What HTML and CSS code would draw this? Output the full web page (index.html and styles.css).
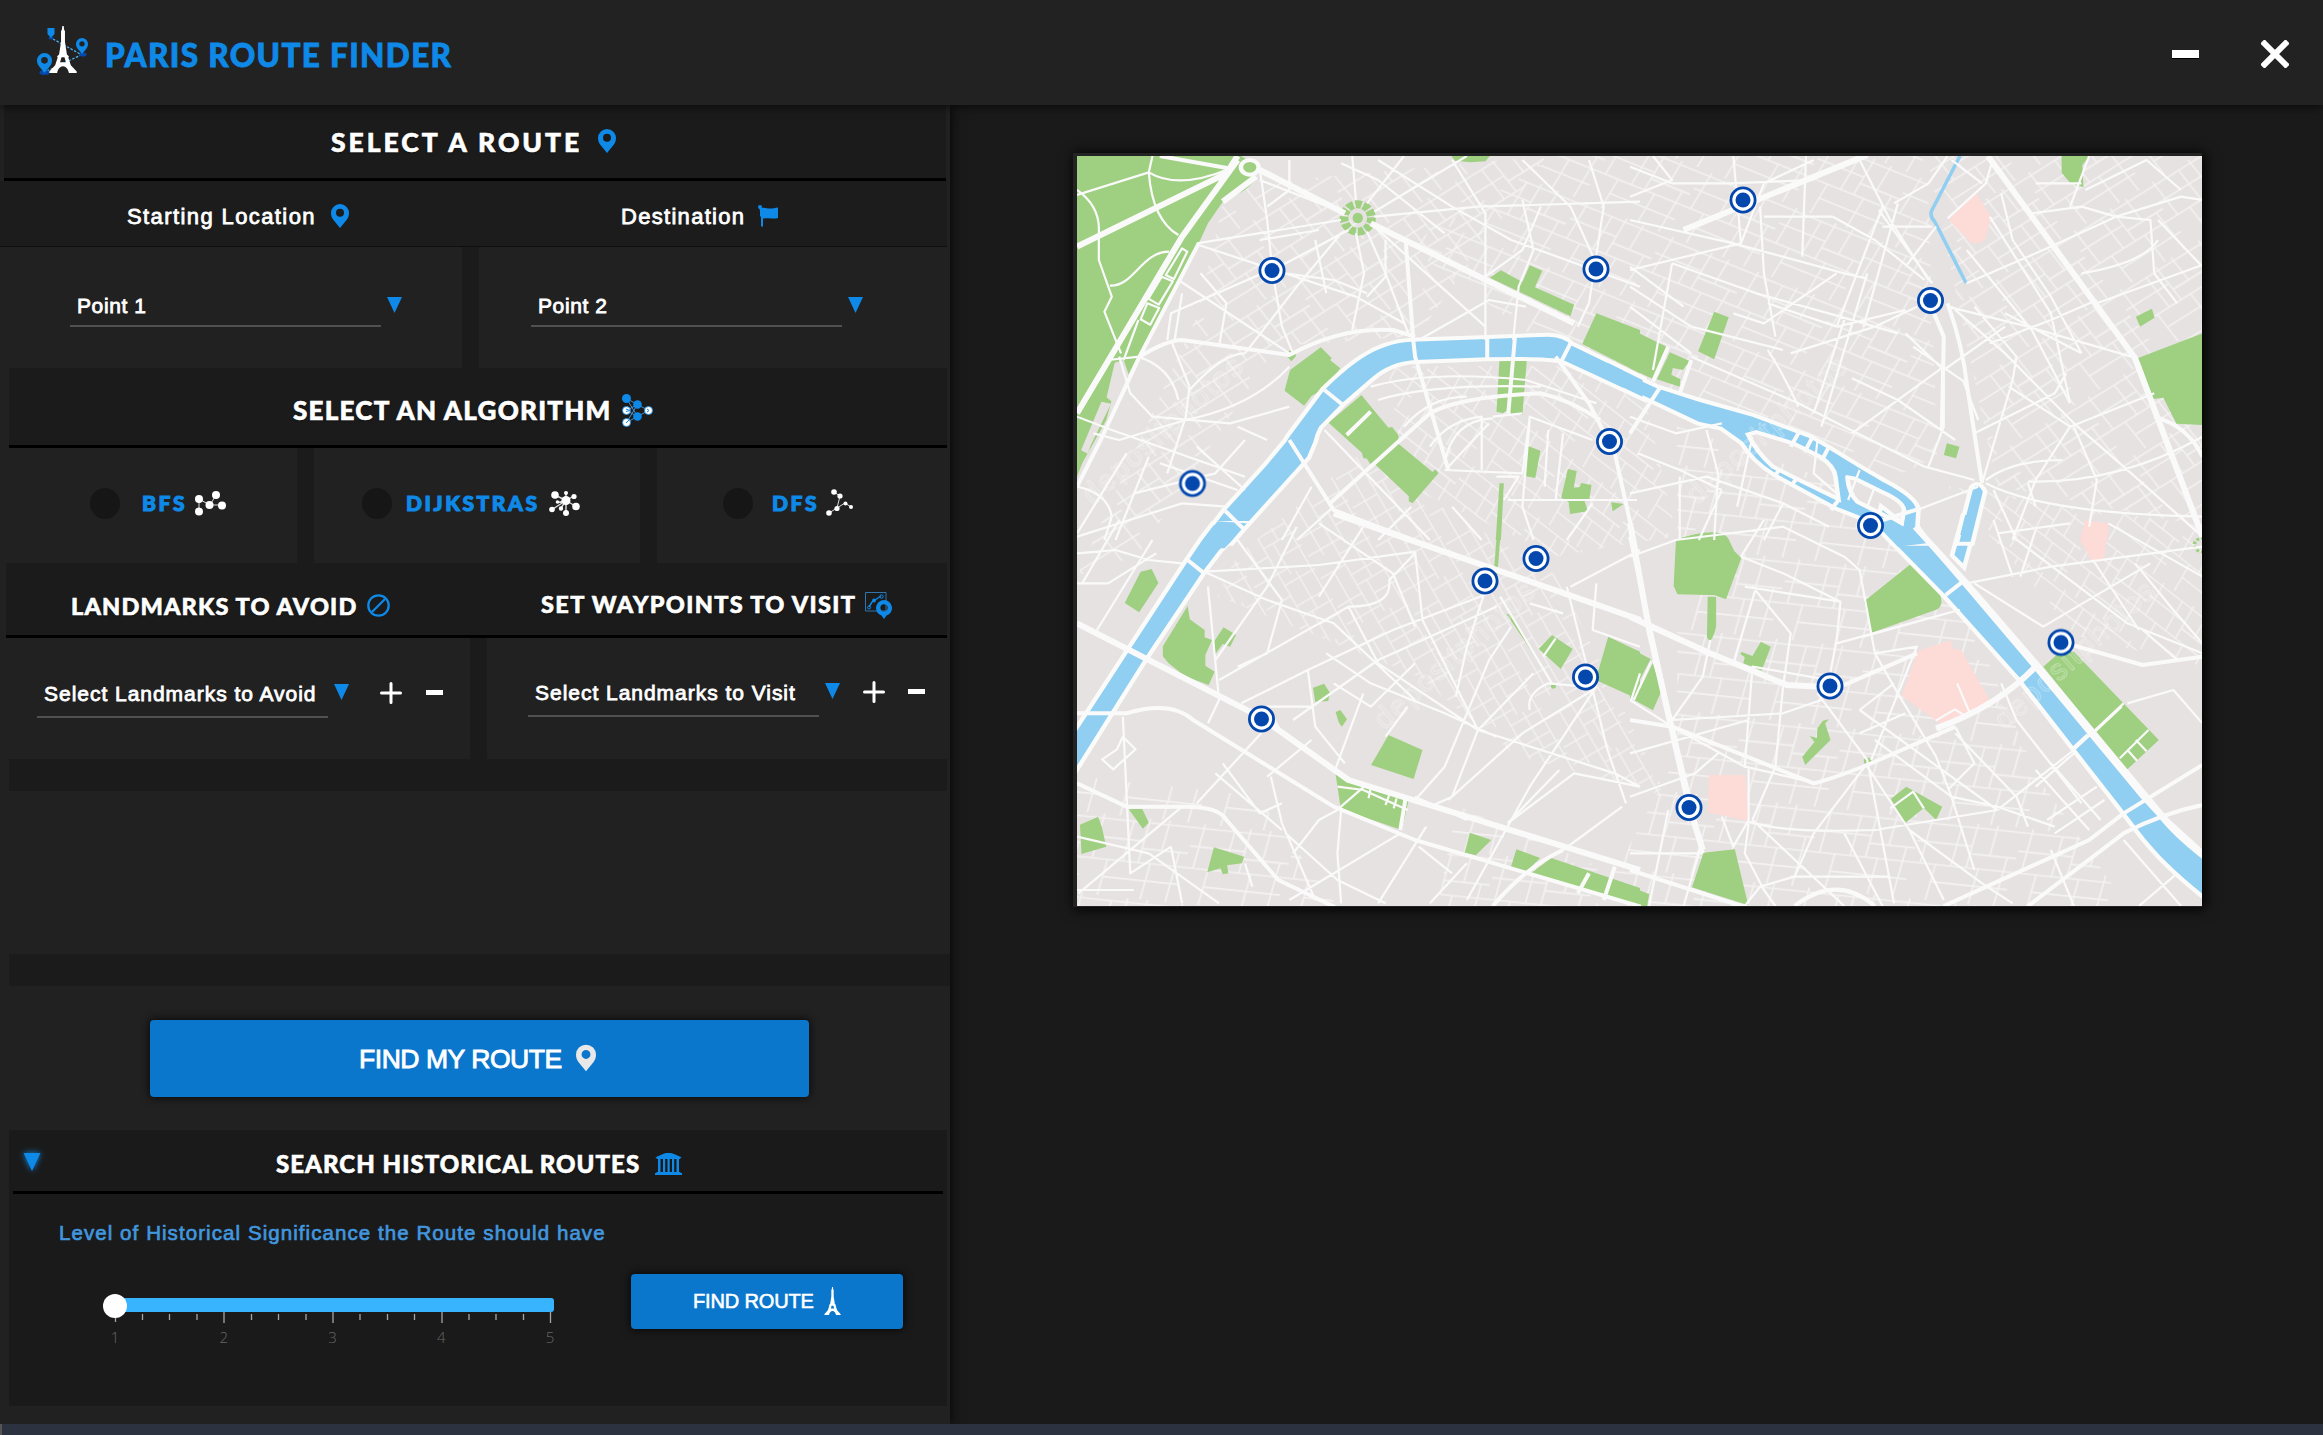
FILE: index.html
```html
<!DOCTYPE html>
<html lang="en">
<head>
<meta charset="utf-8">
<title>Paris Route Finder</title>
<link rel="stylesheet" href="styles.css">
</head>
<body>
<svg class="defs" width="0" height="0">
  <defs>
    <symbol id="pin" viewBox="0 0 18 24"><path fill-rule="evenodd" d="M9 0a9 9 0 0 0-9 9c0 3 1 5 2.500 7L9 24l6.500-8C17 14 18 12 18 9a9 9 0 0 0-9-9zm0 4.800a4 4 0 1 1 0 8 4 4 0 0 1 0-8z"/></symbol>
    <symbol id="tri" viewBox="0 0 15 16"><path d="M0 0h15L7.500 16z"/></symbol>
    <symbol id="tower" viewBox="0 0 28 48"><path fill-rule="evenodd" d="M13.300 0h1.400l.5 4 .8 1v11l2 13 2 2-.5 1.500L22 40l6 6.500V48h-8c-.5-4-3-7-6-7s-5.500 3-6 7H0v-1.500L6 40l2.500-7.500L8 31l2-2 2-13V5l.8-1zM12.500 32l-1.500 5h6l-1.500-5z"/></symbol>
    <symbol id="plus" viewBox="0 0 22 22"><path d="M11 1.500v19M1.500 11h19" stroke="#fff" stroke-width="3" stroke-linecap="round"/></symbol>
    <symbol id="marker" viewBox="-14 -14 28 28"><circle r="13.500" fill="#0448ae"/><circle r="10.700" fill="#fff"/><circle r="7.500" fill="#0448ae"/></symbol>
  </defs>
</svg>
<header class="titlebar">
  <svg class="logo" viewBox="0 0 52 52">
    <path d="M16 13l29 16M10 45l34-16" stroke="#4bb4f5" stroke-width="1.300" stroke-dasharray="2.500 1.500" fill="none"/>
    <ellipse cx="7.500" cy="46.500" rx="5" ry="2.500" fill="#0448ae"/><ellipse cx="46" cy="28.500" rx="3.500" ry="2" fill="#0448ae"/><ellipse cx="14" cy="12" rx="2.500" ry="1.500" fill="#0448ae"/>
    <use href="#pin" x="0" y="27" width="15" height="20"/><use href="#pin" x="39" y="12" width="12" height="16"/>
    <path d="M10.500 2h7v6l-3.500 4-3.500-4z"/>
    <use class="white" href="#tower" x="12" y="0" width="28" height="47"/>
  </svg>
  <h1 class="t-title">PARIS ROUTE FINDER</h1>
  <div class="window-buttons">
    <span class="min"></span>
    <svg class="close" viewBox="0 0 28 28"><path d="M3.500 3.500l21 21M24.500 3.500l-21 21" stroke="#fff" stroke-width="6" stroke-linecap="square" /></svg>
  </div>
</header>
<main class="main">
  <section class="panel">
    <div class="head head-route"><span class="heading t-route">SELECT A ROUTE</span><svg class="i-pin"><use href="#pin"/></svg></div>
    <div class="labels">
      <div class="label-a"><span class="t-start">Starting Location</span><svg class="i-pin"><use href="#pin"/></svg></div>
      <div class="label-b"><span class="t-dest">Destination</span><svg class="i-flag" viewBox="0 0 20 22"><circle cx="2" cy="2" r="2"/><path d="M1 2l2 1c4-1 6 .5 9 .5 3 0 5-.5 8-1V13c-3 1-6 .5-9 .2-2 0-3-.2-6 .3V21l-1 1-1-1V12L2 11V6z"/></svg></div>
    </div>
    <div class="row selects">
      <div class="cell cell-p1"><div class="select w-point"><span class="t-point">Point 1</span></div><svg class="i-tri"><use href="#tri"/></svg></div>
      <div class="cell cell-p2"><div class="select w-point"><span class="t-point">Point 2</span></div><svg class="i-tri"><use href="#tri"/></svg></div>
    </div>
    <div class="head head-algo"><span class="heading t-algo">SELECT AN ALGORITHM</span>
      <svg class="i-algo" viewBox="0 0 31 33"><path d="M4.500 4.500l11 6 11 6-11 6-11 6 11-18M4.500 4.500l11 18-11-6 11-6" stroke="#4a91c9" fill="none"/><circle cx="4.500" cy="4.500" r="4.500"/><circle cx="15.500" cy="10.500" r="4.300"/><circle cx="15.500" cy="22.500" r="4.300"/><g class="white" stroke="#0e89e8" stroke-width=".8"><circle cx="4.500" cy="16.500" r="4"/><circle cx="4.500" cy="28.500" r="4"/><circle cx="26.500" cy="16.500" r="4"/></g><path d="M4 15l4 1.500-4 1M4 29l3-3M25 15l2 1.500-2 1.500" stroke="#0e89e8" fill="none"/></svg>
    </div>
    <div class="row algos">
      <div class="cell cell-bfs"><span class="radio"></span><span class="algo t-bfs">BFS</span>
        <svg class="i-graph" viewBox="0 0 31 25"><g class="white"><path class="edge" d="M4 20V8l11 6 6-10M15 14h12"/><circle cx="4" cy="8" r="4"/><circle cx="4" cy="20.500" r="4"/><circle cx="14.500" cy="14" r="4"/><circle cx="21" cy="4" r="4"/><circle cx="27" cy="14.500" r="4"/></g></svg></div>
      <div class="cell cell-dij"><span class="radio"></span><span class="algo t-dij">DIJKSTRAS</span>
        <svg class="i-graph" viewBox="0 0 31 25"><g class="white"><path class="edge" d="M17 9.500L6 4M17 9.500V2M17 9.500L25 5M17 9.500l10 6M17 9.500V21M17 9.500L3 18.500M17 9.500L12 17M17 9.500l-8 2" stroke-width="1.400"/><circle cx="17" cy="9.500" r="4.500"/><circle cx="6" cy="4" r="3.800"/><circle cx="17" cy="2" r="2"/><circle cx="25" cy="5.500" r="2.600"/><circle cx="27" cy="15.500" r="3.800"/><circle cx="17" cy="22" r="3"/><circle cx="3" cy="18.500" r="2.800"/><circle cx="12" cy="17.500" r="2.200"/><circle cx="8.500" cy="11" r="1.800"/></g></svg></div>
      <div class="cell cell-dfs"><span class="radio"></span><span class="algo t-dfs">DFS</span>
        <svg class="i-dfs" viewBox="0 0 27 27"><g class="white"><path class="edge" d="M8 3l6 4-3 12-8 5M11 19l8-5 6 4"/><circle cx="8" cy="3" r="2.800"/><circle cx="14" cy="7" r="2.600"/><circle cx="11" cy="19.500" r="2.600"/><circle cx="3" cy="24" r="2.800"/><circle cx="19.500" cy="14.500" r="2"/><circle cx="25" cy="18" r="2"/></g></svg></div>
    </div>
    <div class="head head-land">
      <div class="half-a"><span class="heading t-avoid">LANDMARKS TO AVOID</span><svg class="i-ban" viewBox="0 0 23 23"><circle cx="11.500" cy="11.500" r="10.200" fill="none" stroke="#0e89e8" stroke-width="2.300"/><path d="M5 18L18 5" stroke="#0e89e8" stroke-width="2.300"/></svg></div>
      <div class="half-b"><span class="heading t-way">SET WAYPOINTS TO VISIT</span><svg class="i-way" viewBox="0 0 27 27"><path d="M.5.500h20.500v18.500H.5z" fill="none" stroke="#2e76ad"/><path d="M4 15l3-5 3-2 6-4" stroke="#0e89e8" stroke-width="1.500" fill="none"/><circle cx="4" cy="15.500" r="1.500" fill="none" stroke="#0e89e8"/><circle cx="16.500" cy="4.500" r="1.700" fill="none" stroke="#0e89e8"/><circle cx="9" cy="8.500" r="1.900"/><path fill-rule="evenodd" d="M19 8a8 8 0 0 0-2.500 15.600L19 27l2.500-3.400A8 8 0 0 0 19 8zm0 4.200a3.600 3.600 0 1 1 0 7.200 3.600 3.600 0 0 1 0-7.200z"/></svg></div>
    </div>
    <div class="row lands">
      <div class="cell cell-l1"><div class="select w-land"><span class="t-lavoid">Select Landmarks to Avoid</span></div><svg class="i-tri"><use href="#tri"/></svg><svg class="i-plus"><use href="#plus"/></svg><span class="minus"></span></div>
      <div class="cell cell-l2"><div class="select w-land"><span class="t-lvisit">Select Landmarks to Visit</span></div><svg class="i-tri"><use href="#tri"/></svg><svg class="i-plus"><use href="#plus"/></svg><span class="minus"></span></div>
    </div>
    <div class="band band-a"></div>
    <div class="band band-b"></div>
    <button class="btn btn-main"><span class="t-find">FIND MY ROUTE</span><svg class="i-pin-lg"><use href="#pin"/></svg></button>
    <div class="history">
      <div class="history-head"><svg class="i-tri-glow"><use href="#tri"/></svg><span class="heading t-hist">SEARCH HISTORICAL ROUTES</span>
        <svg class="i-museum" viewBox="0 0 27 22"><path d="M0 4.500L8 1l3-1h5l3 1 8 3.500H26L25 6H2L1 4.500zM3 6h2.500v13H3zM8 6h2.200v13H8zM12.500 6h2.200v13h-2.200zM17 6h2.200v13H17zM21.500 6H24v13h-2.500zM1.500 19h24v1H27v2H0v-2h1.500z"/></svg></div>
      <p class="level"><span class="t-level">Level of Historical Significance the Route should have</span></p>
      <div class="controls">
        <div class="slider"><div class="track"><span class="thumb"></span></div>
          <svg class="ticks" viewBox="0 0 440 12"><path d="M1.500 1v9M110 0v11M219 0v11M328 0v11M436.500 0v11M28.500 2v6M55.500 2v6M83 2v6M137.500 2v6M164.500 2v6M192 2v6M246 2v6M273.500 2v6M300.500 2v6M355 2v6M382 2v6M409.500 2v6" stroke="#a5a5a5" stroke-width="1.300"/></svg>
          <div class="numbers"><span>1</span><span>2</span><span>3</span><span>4</span><span>5</span></div>
        </div>
        <button class="btn btn-small"><span class="t-small">FIND ROUTE</span><svg class="i-tower"><use href="#tower"/></svg></button>
      </div>
    </div>
  </section>
  <section class="stage">
    <svg class="map" viewBox="0 0 1125 750">
      <defs>
        <pattern id="mesh" width="92" height="74" patternUnits="userSpaceOnUse"><path d="M0 4H92M0 21H50M50 28H92M0 41H92M22 57H92M8 0V41M22 41V74M36 4V41M50 0V41M61 41V74M68 0V28M84 28V74" stroke="#faf9f9" stroke-width="1.500" fill="none"/></pattern>
        <pattern id="mesh-a" href="#mesh" patternTransform="rotate(22) skewX(-9)"/>
        <pattern id="mesh-b" href="#mesh" patternTransform="rotate(-32) skewX(6)"/>
        <pattern id="mesh-c" href="#mesh" patternTransform="rotate(60) scale(.85)"/>
        <pattern id="mesh-d" href="#mesh" patternTransform="rotate(38) skewX(8) scale(.9)"/>
        <pattern id="mesh-e" href="#mesh" patternTransform="rotate(6) skewX(-10) scale(1.1)"/>
      </defs>
      <rect width="1125" height="750" fill="#e6e2e1"/>
      <g class="mesh">
        <path fill="url(#mesh-a)" d="M480 0H850L860 300 800 330 600 240 470 190 330 90z"/>
        <path fill="url(#mesh-b)" d="M150 30L470 0 340 180 200 190 60 400 0 420 120 160zM850 0h275v370L920 330z"/>
        <path fill="url(#mesh-c)" d="M160 400L280 300 480 420 590 640 440 600 340 520 140 440z"/>
        <path fill="url(#mesh-d)" d="M310 210L560 210 600 380 480 400 330 330zM870 330l255 40v140L1000 480z"/>
        <path fill="url(#mesh-e)" d="M600 270L770 330 900 480 960 620 1050 750H520L600 600zM0 620L180 640 260 750H0zM380 650l140 60v40H360z"/>
      </g>
      <!-- North-west -->
      <g transform="translate(-17 -16) scale(.36990 .33333)">
        <g class="park">
          <path d="M46 48H490L520 70 530 120 500 150 440 185 400 250 375 310 280 500 212 645 182 710 140 780 125 840 60 970 46 1010z"/>
          <path d="M1058 48h104l-12 16-40 3-42-5zM622 690L705 622 735 655 730 660 758 685 715 745 680 768 660 797 607 752 617 710z"/>
          <path d="M815 765l28 38 45 60 10-2 17 25v25l92 85 8-8 8 12-70 90-10-6v-15l-95-100-10 2-8-15-10-2-4-16-90-90z"/>
          <path d="M1162 413l30-22 58 35 20-50 34 16-20 50 106 52-10 35zM1450 520l118 50v130l-156-88zM1188 660h74l-12 165-30-3-8-12-14 10-18-5zM1265 918l34 14-14 82-28-6zM1373 987l24 6-8 50 16-2 4-12 28 6-6 42-14 2 10 35-48 8-4-35-20-14zM1490 1087l34 5-30 22zM1188 1030h12l-8 170h-14z"/>
          <path d="M615 650a12 14 0 1 1 22 0l-12 14z"/>
        </g>
        <path fill="#e6e2e1" d="M148 668l24-8 14 45-40 85-20-18zM112 785l26 6-55 125-8 25-18-10z"/>
        <ellipse cx="805" cy="234" rx="37" ry="41" fill="none" stroke="#9fd081" stroke-width="24" stroke-dasharray="17 5"/><ellipse class="park" cx="805" cy="234" rx="14" ry="16"/>
      </g>
      <!-- North-east -->
      <g transform="translate(553 -16) scale(.38265 .33333)">
        <g class="park">
          <path d="M0 566l98 56-38 95-60-32zM104 637l52 26-18 27-26-6-4 20 24 14-2 22-60-22zM220 515l38 17-38 126-42-24zM1128 48h72l-18 28 3 66-35-14-22-30zM1322 530l42-24 7 27-38 27zM1328 654l168-74v275l-68-4-34-78-26 4zM828 910l33 10-9 35-32-10zM120 1200q90-40 140 0z"/>
          <circle cx="919" cy="1026" r="6"/>
        </g>
        <path class="rose" d="M902 155l42 75-16 72-34 9-61-71zM1190 1142l62 10-4 50h-72z"/>
      </g>
      <!-- South-west -->
      <g transform="translate(-17 364) scale(.36990 .33333)">
        <g class="park">
          <path d="M218 155l30-8 18 42-52 88-39-28zM345 258l6 40 40 32v22l20 8-18 45v32l25 18-16 40-64-26-45-40-15-20v-30zM442 322l34 22-16 36-20-8-20 30-3-38zM684 503l30-12 16 28-5 24-35 3zM758 570l18 28-14 22-8-12-9-32zM888 645l92 45-24 87-115-42zM745 762l62 32 135 50-18 86-165-62zM1108 938l58 22-42 46-30-8zM1234 988l64 26-38 42-42-12zM1328 1014l240 90v55l-300-95zM1330 345l56 42-32 60-60-60zM1482 350l86 45v145l-120-60zM1207 282l12 2 86 160zM103 890l10 30 12 60-67 22-4-88zM186 868l36-2 18 42-16 18zM416 982l82 28-6 20-40 6 3 24-15 3-6-18-36 12z"/>
          <circle cx="1334" cy="499" r="7"/><path d="M1184 0h10l-12 170-10-2z"/>
        </g>
      </g>
      <!-- South-east -->
      <g transform="translate(553 364) scale(.38265 .33333)">
        <g class="park">
          <path d="M120 62q100-45 135-10l18 42 18 20-40 124-30-12-97-3-10-25zM203 230h22v90q-8 40-18 42l-6-10zM342 365l26 15-24 72-48-22 4-18-12-10 4-6 28 12zM736 130q80 75 78 115-2 20-14 24l-170 70-18-95zM0 385l54 32-54 120zM62 424l20 90-22 57-48-30zM520 598l-10 12 14 50-66 75-8-24 32-45-12-18 18 6 2-30 14-22zM722 800l94 60-16 40-32-36-52 48-34-76zM1080 440l50-50 30 5 222 265-84 90zM192 998l82-10 35 168-147-54zM0 1100l50 22-5 36H0z"/>
          <circle cx="621" cy="723" r="10"/><circle cx="1495" cy="75" r="20" fill="none" stroke="#9fd081" stroke-width="9" stroke-dasharray="8 5"/>
        </g>
        <path class="rose" d="M752 393l85-32 8 25 20 4 75 150-120 78-110-90zM1190 0l62 12-14 112-32-2-30-62zM206 765h96l8 138-106-26z"/>
      </g>
      <!-- Seine -->
      <g class="river">
        <path transform="translate(-17 -16) scale(.36990 .33333)" d="M385 1205L447 1113 560 975 612 905 622 888 715 750C780 680 850 610 950 605L1155 597 1320 590Q1365 592 1380 615L1575 720V770L1360 660Q1310 648 1155 652L960 660Q890 665 840 715L762 790 700 860Q690 880 685 905L668 950 493 1165 462 1205z"/>
        <path transform="translate(-17 364) scale(.36990 .33333)" d="M416 15L385 60 345 125 190 388 80 575 30 660V765L128 592 230 412 385 155 430 90 494 15z"/>
        <path transform="translate(553 364) scale(.38265 .33333)" d="M650 20L825 225 1020 475 1285 865 1325 925C1380 1010 1440 1070 1505 1130V1025Q1420 950 1380 890L1335 835 1050 440 865 190 775 70 745 20V-10H720L715 20 660 -30zM875-8h28L870 130l-22-25z"/>
        <path fill-rule="evenodd" transform="translate(553 -16) scale(.38265 .33333)" d="M-6 705L70 745 180 785 320 830 470 895 515 925 600 985 660 1025Q745 1075 748 1110L745 1160 770 1205H690L650 1150 540 1100 380 1000Q325 960 295 905L240 860 180 845 60 780-6 745zM300 880L330 870 430 905 500 945Q540 975 543 1010L552 1088 430 1020 370 985Q325 940 300 880zM565 1005L590 1010 660 1050Q720 1080 722 1110L715 1160 660 1130 590 1090Q565 1060 562 1010zM897 1045q13-18 25 10L890 1205H861z"/>
      </g>
      <g class="river-fill">
        <path transform="translate(-17 -16) scale(.36990 .33333)" d="M1480 668l95 52v50l-95-50zM426 1144L385 1203 371 1225H445L462 1205 505 1150z"/>
        <path transform="translate(553 364) scale(.38265 .33333)" d="M650 20L700 80 775 70 745 20V-10H720L715 20 670-10zM876-15h27l-12 60h-28z"/>
      </g>
      <path d="M883 0L855 54Q852 60 858 66L889 127" fill="none" stroke="#90cff1" stroke-width="3.500"/>
      <!-- Side streets -->
      <g class="minor">
        <g transform="translate(-17 -16) scale(.36990 .33333)">
          <path d="M46 165L240 97 250 48M240 97Q250 240 320 285M240 97Q320 150 455 88M46 150Q110 200 105 280V360L140 470 120 515 165 640M135 437C200 440 220 335 295 335M130 660L215 650M46 830L140 870 500 1010M330 325l14 10-36 82-22-12zM275 410l30 14-38 70-28-18zM236 490l32 14-24 50-26-16zM212 540l-40 120"/>
          <path d="M540 85L560 240 575 400 600 560 630 640M800 180L790 48M830 190L930 48M850 230L1130 200 1568 185M850 215L1100 48M760 215L540 120M760 240L370 310M780 270L610 370 300 520 290 600M800 280L822 400 790 570M830 275L880 400 945 590M850 260L1150 560M760 280L640 440 500 640M320 420L620 640M375 315L800 470 930 550M610 400L740 420 830 460M860 60L1060 200 1220 300 1568 440M1060 60L1150 220V600M1250 180L1280 330 1240 440 1225 600M1250 60L1380 200 1470 420M1430 60L1470 200 1430 490 1400 560M1150 410L1250 330 1300 200M970 600L1160 480 1260 500M300 600L350 740 340 830 290 1000M160 650L190 760 250 830 460 850 620 800M210 650Q300 680 320 780M350 750Q440 640 500 640M620 680Q520 800 340 840L160 900 90 880M500 900L420 1000 200 1060M480 860L560 900M370 920L500 1050M46 1040Q130 1060 140 1130L120 1200M240 950L150 1200M180 940L46 1180M270 970L480 1050M330 1090L450 1100"/>
          <path d="M715 870L1000 1200M740 1080L950 870M840 740Q1000 690 1260 720L1450 790M860 780Q1000 730 1300 740M930 860Q1000 770 1100 770M1040 970Q1060 840 1170 835M1000 920Q1050 840 1140 830V990M1040 990L1250 1000 1270 830 1440 900M1050 980L1160 850M1170 830L1250 820M1210 1080H1560M1180 1010H1240L1200 1080M1270 840L1250 1100 1280 1200M1320 870L1310 1040M1360 880L1340 1080M1060 1100L1140 1200M600 1200L680 1040M640 1200L740 1100M950 1100L860 1200M1440 1090L1370 1200M46 1190L330 1090M760 70L860 120 1040 280M620 60L620 150 560 200M540 300L700 270M380 400L450 490 430 620M330 460L310 600M690 300L720 460M880 300V410L830 470"/>
        </g>
        <g transform="translate(553 -16) scale(.38265 .33333)">
          <path d="M0 80L110 130 260 130 480 120M0 170L110 120 60 48M0 240L270 310 560 400 620 415M0 390L290 310 350 130 480 60M110 370L60 690M290 310L270 48M450 350L460 48M340 200L350 400 380 590M0 380L140 500M0 440L160 560 400 630M110 370L330 460 550 530 700 580M270 520L350 550 540 400M360 490L540 560 720 510M160 650L440 790 560 860M0 500L160 640M420 640L640 560 750 500M560 540L480 820M620 400L500 860M660 200L540 560M600 60L680 240 780 420M530 230L640 300 770 420M650 210L790 430M690 190L780 130 830 48M700 190L610 560M800 260L720 380M530 230H350M660 260H790M830 235L930 130 945 70M840 60L920 130M940 230L1100 520 1150 790M970 160L1000 300 1100 470 1180 640M880 430L1080 330 1270 230 1440 170 1496 180M1050 220L1180 200 1270 230M1200 48L1150 200M1270 230L1360 240 1370 400 1430 490M1380 240L1496 380M1190 150L1350 60 1440 150M1060 130L1180 130M1180 400Q1340 370 1380 300M1220 490L1496 375M980 520L1180 640M880 330L1050 570 1150 790M900 500L1010 650 1000 720 920 1030M840 500L980 640 1160 850 1310 1000 1496 1190M830 500L1040 560 1310 650M940 610L1100 540 1220 480M820 680L580 880M820 690L720 580M820 690V860L780 980M820 690L980 560M740 620L880 730M870 720L910 840M580 715L700 780 850 900M560 860L770 980 900 1020M900 880L1110 760 1140 700M1150 860L1370 760M1150 860L1060 1020 1000 1200M1160 860L1220 1020 1200 1160M930 1020Q1000 960 1130 960M1040 1025Q1280 1030 1496 890M930 1030Q1080 1120 1496 1130M950 1050L1010 1200M1040 1030L1060 1100M0 830L120 880 240 850M20 940L130 990 240 1050M200 870L230 1000 220 1200M130 1010V1200M0 1060L200 1010 400 1090 520 1160M240 1050L180 1200M400 1090L350 1200M320 890L280 1100M490 900L480 1000 540 1060M600 990L570 1080M640 1040L620 1100M750 1110L910 1040M990 740L1150 860M360 630Q400 700 440 800"/>
        </g>
        <g transform="translate(-17 364) scale(.36990 .33333)">
          <path d="M46 100L150 90 240 120 330 130M46 190H130L260 100M160 0L60 190M250 60L100 330M390 155L700 135 960 95M390 155L560 240 740 310 960 540M400 200L430 540 400 610M480 60L600 240 560 400 480 440M960 95L980 300 1080 520 1130 630M640 20L560 200 420 420M700 10L900 160 960 320M780 260Q900 260 890 180L960 100M780 260L860 430M780 260L430 480M820 20L700 230M1160 220L900 330 670 450 490 550M1180 260L860 420 630 600M670 450L690 620 770 730M860 430L1130 630 1060 830 1000 860M1150 210L1100 380 1070 530M1130 630L1500 760 1568 800M1130 630L1280 460M1370 200L1420 420 1480 690 1530 850M1220 320L1160 420 1040 740 960 840M1440 510L1250 640 1050 840M1450 500L1270 800 1100 1140M1420 500L1320 490Q1260 520 1270 570M1330 490L1190 230M1380 200L1568 90M1270 250L1360 280M1450 190L1440 330 1568 380M720 400L840 490 1040 580 1180 650M740 490L840 560 960 430M820 520L740 760M940 560L880 650M600 640L560 560H680M560 620L370 850M680 660L560 770M420 760L600 930M440 730L540 880 600 850M170 590L190 1060 300 980M46 950L240 1000M46 1110H200M50 1120L330 860M570 770L600 910 690 1140M760 870L750 1000 760 1150M920 940L620 1140M610 940L750 1080 880 1150M990 920L860 1150M970 980L1060 1060M1100 1030L1000 1150M1100 900L960 830M1210 910L1390 760 1568 800M1210 910L1350 750M1520 860L1360 990M300 980L330 1150M240 1000L430 1150M500 1030L520 1100M750 870L700 900 630 1000M170 650l34 38-60 60-30-30 40-30z"/>
          <path d="M750 800l70 10 120 60M822 800l-68 65M840 805l-6 30M890 825l-10 30M910 835l-8 30M1340 355l-34 55M1568 460l-24 80"/>
        </g>
        <g transform="translate(553 364) scale(.38265 .33333)">
          <path d="M0 110L120 60 400 20 560 110 600 150 640 400 700 520 800 710 840 830M290 110L400 160 550 245M290 110L350 0M300 200L550 245 540 360 520 480M320 200L420 340 400 500 380 740 320 900M210 360L190 470 110 600M110 600L400 580 500 540M110 600L60 420M330 200L270 430M0 540L110 620 300 740 490 790M640 400L750 380 630 720M490 520L620 720 690 1150M540 370L860 270 610 350M640 660L840 830 960 860M620 730L480 940 430 1070 340 1100M620 740L730 930 820 1140M310 905Q400 940 640 930L960 870M960 870L600 570M960 870L1160 690 1290 550M960 860L1110 920M850 640L1010 830 1040 920M840 830L900 1050M730 930L920 1090 1000 1150M310 910L300 1000 350 1110 380 1158M320 900L560 1158M310 900L270 980 240 890M310 740V900M0 700L310 600M0 830L170 760 230 700M0 1000L190 1000M100 870L50 1158M190 960L140 1158M300 740L320 440 520 480M600 570L690 490M600 640L720 580M420 1070H680M560 940L660 1158M1100 990L1160 1158M1290 960L1440 1158M880 190L1100 140 1496 80M900 190L1080 320 1360 130M950 0L1000 170M1000 50L1300 310 1496 400M1210 120L1330 330M1320 130L1420 270 1496 370M1340 330L1430 420M1300 550L1420 510 1496 610M960 40L1150 10M1060 30L1020 170M1250 10L1496 170M970 490L1010 600 1180 850M1060 750L1200 930M1100 730L1230 900M1160 700L1060 800M1220 800L1090 900M1240 840L1110 940M340 1100L300 1158M1430 1060L1330 1158M850 620l50 110-70 80"/>
          <path d="M855 490l34 92-10 8-30-22-50 34M55 425L10 540M680 865l60-50 28 50M1215 635l70-75M1280 715l75-85M1300 690l25 32M1322 660l28 34"/>
        </g>
      </g>
      <!-- Boulevards -->
      <g class="avenue">
        <g transform="translate(-17 -16) scale(.36990 .33333)"><path d="M375 310L215 650 110 900 46 1040M215 650Q290 600 330 600L620 645Q760 560 900 570L960 590M935 310L955 600 960 650 1050 990M730 1090L1000 820Q1080 770 1300 760Q1380 780 1460 840M620 900L740 1110 1050 1240M1340 650L1430 790 1500 940 1560 1240M270 48L455 85M715 750l50 45M447 1113l48 52M1155 590v65M1230 590l-18 230M1380 610l-25 55M775 885l65-70"/></g>
        <g transform="translate(553 -16) scale(.38265 .33333)"><path d="M100 620L60 725M80 740L0 880M780 480L820 590 815 870M830 490Q870 620 880 730L920 1030M1370 830Q1460 860 1496 950M160 660L130 760M440 880l-20 40M475 895l-18 40M520 920l-18 40M660 1140l100-35M390 990l-14 20M435 1015l-14 24M545 1080l-20 30"/></g>
        <g transform="translate(-17 364) scale(.36990 .33333)"><path d="M46 580H180Q300 540 360 600L740 860 960 960 1570 1160M46 790L180 860H340Q430 860 450 900L590 1080 760 1170M1170 1158Q1260 1040 1360 990M1500 1040L1470 1140M1430 1060L1400 1120M345 120l45 40M935 830L920 930"/></g>
        <g transform="translate(553 364) scale(.38265 .33333)"><path d="M0 1050L310 1165M0 600L110 620 480 790Q520 780 620 735L850 620M550 500L750 400M1140 370L1340 435 1496 410M820 1158L1200 960 1290 880 1496 735M1040 1158L1290 940Q1390 880 1496 855M430 1158Q540 1060 640 1158M825 225l42-38M1155 690l42-45M0 50L100 570 190 1000"/></g>
      </g>
      <g class="artery">
        <g transform="translate(-17 -16) scale(.36990 .33333)"><path d="M480 60L330 290 46 820M46 320L450 100 480 48M530 110L440 185M540 90L770 220M840 250L1390 550"/><ellipse cx="513" cy="82" rx="24" ry="22" class="park"/></g>
        <g transform="translate(553 -16) scale(.38265 .33333)"><path d="M140 270L620 45M935 48L1320 655 1496 1190"/></g>
        <g transform="translate(-17 364) scale(.36990 .33333)"><path d="M46 310L540 590 780 780 1568 1050M740-20L1570 300"/></g>
        <g transform="translate(553 364) scale(.38265 .33333)"><path d="M0 290L200 395 410 495 500 500M0 10L50 330 155 860 190 990M745 20L880 190 1060 430 1400 900 1496 1000M800 625Q960 560 1060 440"/></g>
      </g>
      <g class="watermark">
        <text transform="translate(16 350) rotate(-42)">depositphotos</text><text transform="translate(620 350) rotate(-42)">depositphotos</text>
        <text transform="translate(308 575) rotate(-42)">depositphotos</text><text transform="translate(928 575) rotate(-42)">depositphotos</text>
      </g>
      <g>
        <use href="#marker" x="181" y="100.500" width="28" height="28"/><use href="#marker" x="505" y="99" width="28" height="28"/>
        <use href="#marker" x="652" y="30" width="28" height="28"/><use href="#marker" x="839.500" y="130.500" width="28" height="28"/>
        <use href="#marker" x="101.500" y="313.500" width="28" height="28"/><use href="#marker" x="518.500" y="271.500" width="28" height="28"/>
        <use href="#marker" x="779.500" y="355.500" width="28" height="28"/><use href="#marker" x="445" y="388.500" width="28" height="28"/>
        <use href="#marker" x="394" y="411" width="28" height="28"/><use href="#marker" x="494.500" y="507" width="28" height="28"/>
        <use href="#marker" x="170.500" y="549" width="28" height="28"/><use href="#marker" x="739" y="516" width="28" height="28"/>
        <use href="#marker" x="970" y="472.500" width="28" height="28"/><use href="#marker" x="598" y="637.500" width="28" height="28"/>
      </g>
    </svg>
  </section>
</main>
<footer class="taskbar"></footer>
</body>
</html>
```
FILE: styles.css
```css
* { box-sizing: border-box; }
body { margin: 0; width: 2323px; height: 1435px; overflow: hidden; display: flex; flex-direction: column; background: #1a1a1a; color: #fff; font-family: "Liberation Sans", Arial, sans-serif; }
svg { flex: none; display: block; fill: #0e89e8; }
.defs { position: absolute; }
.white { fill: #fff; }
span { white-space: nowrap; flex: none; }

.titlebar { position: relative; z-index: 3; height: 105px; flex: none; display: flex; align-items: flex-start; padding-left: 37px; background: #222; box-shadow: 0 1px 10px #000b; }
.logo { width: 52px; height: 52px; margin-top: 26px; }
.t-title { width: 1000px; margin: 35px 0 0 16px; font: 900 31.500px/40px Lato, sans-serif; letter-spacing: 1.350px; color: #0e89e8; white-space: nowrap; -webkit-text-stroke: .8px #0e89e8; }
.window-buttons { display: flex; margin-left: auto; padding: 40px 34px 0 0; }
.min { width: 27px; height: 8px; margin: 10px 62px 0 0; background: #fff; box-shadow: 0 1px #000; }
.close { width: 28px; height: 28px; }

.main { flex: 1; display: flex; min-height: 0; }
.panel { position: relative; z-index: 2; width: 950px; flex: none; background: #212121; box-shadow: 1px 0 12px #000c; display: flex; flex-direction: column; }
.stage { flex: 1; padding: 51px 0 0 127px; }
.map { width: 1125px; height: 750px; overflow: hidden; box-shadow: -2px -1px 0 2px #232323, 0 0 12px 3px #000; }
.taskbar { position: relative; z-index: 3; height: 11px; flex: none; background: #2d3241; border-left: 2px solid #555; }

.heading { font-family: Lato, sans-serif; font-weight: 900; line-height: 32px; text-shadow: 0 1px 2px #0008; -webkit-text-stroke: .6px #fff; }
.head { display: flex; flex: none; background: #1b1b1b; border-bottom: 3px solid #000; }
.head-route { height: 76px; margin: 0 4px; padding: 21px 0 0 327px; }
.t-route { width: 267px; font-size: 26.500px; letter-spacing: 2.950px; }
.i-pin { width: 18px; height: 24px; margin-top: 3px; }
.labels { height: 66px; margin-right: 3px; padding-top: 20px; display: flex; background: #1c1c1c; border-bottom: 1px solid #0e0e0e; font-size: 22px; line-height: 32px; -webkit-text-stroke: .8px #fff; }
.label-a { display: flex; width: 493px; padding-left: 127px; }
.label-b { display: flex; padding-left: 128px; }
.t-start { width: 204px; letter-spacing: 1.400px; }
.t-dest { width: 137px; letter-spacing: 1.300px; }
.i-flag { width: 20px; height: 22px; margin-top: 4px; }
.row { display: flex; flex: none; margin-right: 3px; background: #1b1b1b; }
.cell { background: #212121; display: flex; align-items: flex-start; flex: none; }
.selects { height: 121px; gap: 17px; }
.cell-p1 { width: 462px; padding: 42px 0 0 70px; }
.cell-p2 { width: 468px; padding: 42px 0 0 52px; }
.select { padding-left: 7px; border-bottom: 2px solid #505050; font-size: 21px; line-height: 34px; -webkit-text-stroke: .8px #fff; }
.w-point { width: 311px; height: 38px; margin-right: 6px; }
.t-point { letter-spacing: .6px; }
.i-tri { width: 15px; height: 16px; margin-top: 8px; }
.head-algo { height: 80px; margin: 0 3px 0 9px; padding: 26px 0 0 284px; }
.t-algo { width: 329px; font-size: 26px; letter-spacing: 1.250px; }
.i-algo { width: 31px; height: 33px; }
.algos { height: 115px; gap: 17px; margin-left: 9px; }
.cell-bfs { width: 288px; padding: 40px 0 0 81px; }
.cell-dij { width: 326px; padding: 40px 0 0 48px; }
.cell-dfs { width: 290px; padding: 40px 0 0 66px; }
.radio { width: 30px; height: 31px; border-radius: 50%; background: #161616; }
.algo { color: #0e89e8; font: 900 21px/30px Lato, sans-serif; letter-spacing: 2.600px; -webkit-text-stroke: 1.100px #0e89e8; }
.t-bfs { width: 53px; margin-left: 22px; }
.t-dij { width: 143px; margin-left: 14px; }
.t-dfs { width: 54px; margin-left: 19px; }
.i-graph { width: 31px; height: 25px; margin-top: 3px; }
.i-dfs { width: 27px; height: 27px; margin-top: 1px; }
.edge { fill: none; stroke: #ddd; }
.head-land { height: 75px; margin: 0 3px 0 6px; }
.half-a { display: flex; width: 535px; padding: 27px 0 0 65px; }
.half-b { display: flex; padding-top: 25px; }
.t-avoid { width: 296px; font-size: 23.500px; letter-spacing: 1.150px; }
.t-way { width: 324px; font-size: 23.500px; letter-spacing: 1.350px; }
.i-ban { width: 23px; height: 23px; margin-top: 4px; }
.i-way { width: 27px; height: 27px; margin-top: 4px; }
.lands { height: 121px; gap: 17px; }
.cell-l1 { width: 470px; padding: 38px 0 0 37px; }
.cell-l2 { width: 460px; padding: 37px 0 0 41px; }
.w-land { width: 291px; height: 42px; margin-right: 6px; }
.lands .select { line-height: 35px; }
.t-lavoid, .t-lvisit { letter-spacing: .970px; }
.i-plus { width: 22px; height: 22px; margin: 6px 0 0 31px; }
.cell-l2 .i-plus { margin-left: 23px; }
.minus { width: 17px; height: 5px; margin: 14px 0 0 24px; background: #fff; }
.cell-l2 .minus { margin-left: 23px; }
.band { height: 32px; flex: none; margin: 0 3px 0 9px; background: #1b1b1b; }
.band-b { margin: 163px 0 0 9px; }
.btn { display: flex; flex: none; border: 0; border-radius: 4px; padding: 0; background: #0a77cc; color: #fff; font-family: inherit; box-shadow: 0 0 9px 1px #000b; }
.btn svg { fill: #fff; }
.btn-main { width: 659px; height: 77px; margin: 34px 0 0 150px; padding: 23px 0 0 209px; }
.t-find { width: 217px; text-align: left; font-size: 26.500px; line-height: 32px; letter-spacing: -.450px; -webkit-text-stroke: .9px #fff; }
.btn .i-pin-lg { width: 20px; height: 28px; margin-top: 1px; fill: #e8e8e8; }
.history { height: 276px; flex: none; margin: 33px 3px 0 9px; background: #1a1a1a; }
.history-head { height: 64px; margin: 0 4px; display: flex; padding: 18px 0 0 10px; border-bottom: 3px solid #000; }
.i-tri-glow { width: 18px; height: 18px; margin-top: 5px; overflow: visible; filter: drop-shadow(0 0 3px #0e89e8); }
.t-hist { width: 379px; margin-left: 235px; font-size: 24px; letter-spacing: 1.050px; }
.i-museum { width: 27px; height: 22px; margin-top: 5px; }
.level { margin: 22px 0 0 50px; height: 34px; font-size: 20.500px; line-height: 34px; color: #4196de; -webkit-text-stroke: .7px #4196de; }
.t-level { letter-spacing: 1.070px; }
.controls { display: flex; align-items: flex-start; }
.slider { width: 451px; margin: 48px 0 0 94px; }
.track { height: 14px; margin-left: 12px; border-radius: 3px; background: #38b4ff; position: relative; }
.thumb { position: absolute; left: -12px; top: -4px; width: 24px; height: 24px; border-radius: 50%; background: #fff; }
.ticks { width: 440px; height: 12px; margin-left: 11px; }
.numbers { display: flex; justify-content: space-between; margin: 3px -2px 0 6px; font: 300 15px/20px "Open Sans", sans-serif; color: #666; }
.numbers span { width: 12px; text-align: center; }
.btn-small { width: 272px; height: 55px; margin: 24px 0 0 77px; padding: 13px 0 0 62px; }
.t-small { width: 131px; text-align: left; font-size: 20px; line-height: 29px; letter-spacing: -.150px; -webkit-text-stroke: .6px #fff; }
.i-tower { width: 17px; height: 28px; }

.park { fill: #9fd081; }
.rose { fill: #fddbd7; }
.river { fill: #90cff1; stroke: #fbfbfa; stroke-width: 24px; paint-order: stroke; }
.river-fill { fill: #90cff1; }
.mesh { opacity: .7; }
.minor, .avenue, .artery { fill: none; stroke: #fbfafa; stroke-linejoin: round; }
.minor path { stroke-width: 2.200px; vector-effect: non-scaling-stroke; }
.avenue path { stroke-width: 4px; vector-effect: non-scaling-stroke; }
.artery path { stroke-width: 6px; vector-effect: non-scaling-stroke; }
.artery .park { fill: #9fd081; stroke-width: 12px; }
.watermark { fill: none; stroke: #fff; stroke-width: .8px; opacity: .4; font: 29px "Liberation Sans", sans-serif; letter-spacing: 2px; }
```
